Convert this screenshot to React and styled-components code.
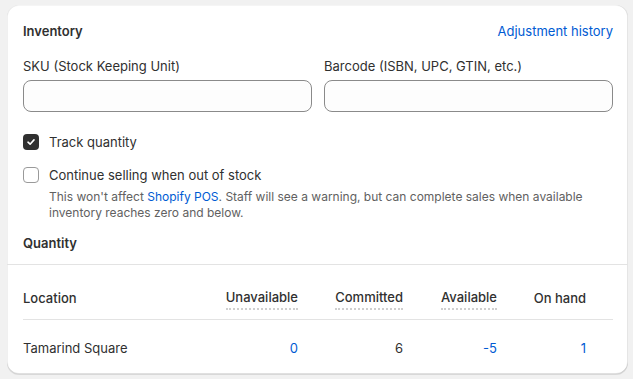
import React from "react";
import styled, { createGlobalStyle } from "styled-components";

const GlobalStyle = createGlobalStyle`
  body {
    margin: 0;
    background: #f1f1f1;
    font-family: Inter, "Noto Sans", sans-serif;
    color: #303030;
    font-size: 13px;
  }
`;

const Page = styled.div`
  padding: 5px 5px 5px 7px;
`;

const Card = styled.div`
  background: #fff;
  border-radius: 12px;
  box-shadow: 0 1px 0 rgba(0, 0, 0, 0.1), inset 0 -1px 0 rgba(0, 0, 0, 0.12),
    inset -1px 0 0 rgba(0, 0, 0, 0.1), inset 1px 0 0 rgba(0, 0, 0, 0.06),
    inset 0 1px 0 rgba(0, 0, 0, 0.04);
  overflow: hidden;
`;

const Section = styled.div`
  padding: 16px 15px 11px 16px;
  display: flex;
  flex-direction: column;
`;

const Header = styled.div`
  display: flex;
  justify-content: space-between;
  align-items: center;
  height: 20px;
`;

const Title = styled.h2`
  margin: 0;
  font-size: 13px;
  font-weight: 600;
  line-height: 20px;
  color: #303030;
`;

const Link = styled.a`
  color: #005bd3;
  text-decoration: none;
  font-size: 13px;
  line-height: 20px;
  cursor: pointer;
`;

const Fields = styled.div`
  display: grid;
  grid-template-columns: 1fr 1fr;
  gap: 12px;
  margin-top: 15px;
`;

const Field = styled.label`
  display: flex;
  flex-direction: column;
  gap: 4px;
`;

const Label = styled.span`
  line-height: 20px;
  color: #303030;
`;

const Input = styled.input`
  height: 32px;
  box-sizing: border-box;
  border: 1px solid #8a8a8a;
  border-radius: 8px;
  background: #fdfdfd;
  font: inherit;
  padding: 0 12px;
  outline: none;
`;

const CheckRow = styled.div`
  display: flex;
  align-items: flex-start;
  gap: 10px;
  margin-top: ${(p) => p.$top}px;
`;

const Box = styled.span`
  width: 16px;
  height: 16px;
  box-sizing: border-box;
  border-radius: 4px;
  flex-shrink: 0;
  margin-top: 2px;
  display: flex;
  align-items: center;
  justify-content: center;
  background: ${(p) => (p.$checked ? "#303030" : "#fff")};
  border: ${(p) => (p.$checked ? "none" : "1px solid #9a9a9a")};
`;

const CheckText = styled.div`
  display: flex;
  flex-direction: column;
`;

const CheckLabel = styled.span`
  line-height: 20px;
`;

const Help = styled.p`
  margin: 4px 0 0;
  font-size: 12px;
  line-height: 16px;
  color: #616161;
`;

const HelpLink = styled.span`
  color: #005bd3;
`;

const SubTitle = styled.h3`
  margin: 12px 0 0;
  font-size: 13px;
  font-weight: 600;
  line-height: 20px;
`;

const TableWrap = styled.div`
  border-top: 1px solid #e3e3e3;
  padding: 0 15px 0 16px;
`;

const Row = styled.div`
  display: grid;
  grid-template-columns: 1fr 100px 105px 94px 89px;
  padding-right: 27px;
  align-items: center;
  height: ${(p) => (p.$head ? 55 : 54)}px;
  border-bottom: ${(p) => (p.$head ? "1px solid #e3e3e3" : "none")};
  box-sizing: border-box;
`;

const HeadCell = styled.div`
  font-weight: 550;
  color: #303030;
  text-align: ${(p) => (p.$plain ? "left" : "right")};
  padding-top: ${(p) => (p.$plain ? 12 : 10)}px;
`;

const OnHand = styled(HeadCell)`
  text-align: right;
`;

const Dotted = styled.span`
  border-bottom: 2px dotted #cfcfcf;
  padding-bottom: 3px;
  line-height: 20px;
`;

const Cell = styled.div`
  text-align: ${(p) => (p.$left ? "left" : "right")};
  color: ${(p) => (p.$link ? "#005bd3" : "#303030")};
  padding-top: 2px;
`;

const Check = () => (
  <svg width="10" height="10" viewBox="0 0 10 10">
    <path
      d="M2 5.2 L4.1 7.2 L8 2.9"
      fill="none"
      stroke="#fff"
      strokeWidth="1.6"
      strokeLinecap="round"
      strokeLinejoin="round"
    />
  </svg>
);

export default function App() {
  return (
    <>
      <GlobalStyle />
      <Page>
        <Card>
          <Section>
            <Header>
              <Title>Inventory</Title>
              <Link>Adjustment history</Link>
            </Header>
            <Fields>
              <Field>
                <Label>SKU (Stock Keeping Unit)</Label>
                <Input />
              </Field>
              <Field>
                <Label>Barcode (ISBN, UPC, GTIN, etc.)</Label>
                <Input />
              </Field>
            </Fields>
            <CheckRow $top={20}>
              <Box $checked>
                <Check />
              </Box>
              <CheckText>
                <CheckLabel>Track quantity</CheckLabel>
              </CheckText>
            </CheckRow>
            <CheckRow $top={13}>
              <Box />
              <CheckText>
                <CheckLabel>Continue selling when out of stock</CheckLabel>
                <Help>
                  This won't affect <HelpLink>Shopify POS</HelpLink>. Staff will
                  see a warning, but can complete sales when available inventory
                  reaches zero and below.
                </Help>
              </CheckText>
            </CheckRow>
            <SubTitle>Quantity</SubTitle>
          </Section>
          <TableWrap>
            <Row $head>
              <HeadCell $plain>Location</HeadCell>
              <HeadCell>
                <Dotted>Unavailable</Dotted>
              </HeadCell>
              <HeadCell>
                <Dotted>Committed</Dotted>
              </HeadCell>
              <HeadCell>
                <Dotted>Available</Dotted>
              </HeadCell>
              <OnHand $plain>On hand</OnHand>
            </Row>
            <Row>
              <Cell $left>Tamarind Square</Cell>
              <Cell $link>0</Cell>
              <Cell>6</Cell>
              <Cell $link>-5</Cell>
              <Cell $link>1</Cell>
            </Row>
          </TableWrap>
        </Card>
      </Page>
    </>
  );
}
